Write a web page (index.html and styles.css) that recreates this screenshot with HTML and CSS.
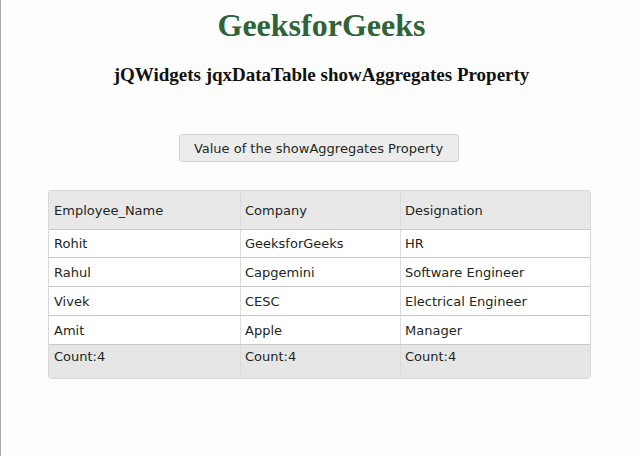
FILE: index.html
```html
<!DOCTYPE html>
<html>
<head>
<meta charset="utf-8">
<link rel="stylesheet" href="styles.css">
</head>
<body>
<div class="page">
  <h1 class="title">GeeksforGeeks</h1>
  <h3 class="subtitle">jQWidgets jqxDataTable showAggregates Property</h3>
  <div class="btn-wrap">
    <button class="btn">Value of the showAggregates Property</button>
  </div>
  <div class="table">
    <div class="row head">
      <div class="cell c1">Employee_Name</div>
      <div class="cell c2">Company</div>
      <div class="cell c3">Designation</div>
    </div>
    <div class="row first">
      <div class="cell c1">Rohit</div>
      <div class="cell c2">GeeksforGeeks</div>
      <div class="cell c3">HR</div>
    </div>
    <div class="row">
      <div class="cell c1">Rahul</div>
      <div class="cell c2">Capgemini</div>
      <div class="cell c3">Software Engineer</div>
    </div>
    <div class="row">
      <div class="cell c1">Vivek</div>
      <div class="cell c2">CESC</div>
      <div class="cell c3">Electrical Engineer</div>
    </div>
    <div class="row">
      <div class="cell c1">Amit</div>
      <div class="cell c2">Apple</div>
      <div class="cell c3">Manager</div>
    </div>
    <div class="row agg">
      <div class="cell c1">Count:4</div>
      <div class="cell c2">Count:4</div>
      <div class="cell c3">Count:4</div>
    </div>
  </div>
</div>
</body>
</html>
```
FILE: styles.css
```css
html, body {
  margin: 0;
  padding: 0;
  background: #fdfdfd;
}
.page {
  border-left: 1px solid #a8a8a8;
  height: 456px;
  box-sizing: border-box;
  padding-top: 7px;
}
.title {
  font-family: "Liberation Serif", serif;
  font-weight: bold;
  font-size: 32px;
  line-height: 37px;
  color: #2f6338;
  text-align: center;
  margin: 0;
}
.subtitle {
  font-family: "Liberation Serif", serif;
  font-weight: bold;
  font-size: 19px;
  line-height: 22px;
  color: #111;
  text-align: center;
  margin: 20px 0 0 0;
}
.btn-wrap {
  display: flex;
  justify-content: center;
  margin-top: 48px;
  padding-right: 6px;
}
.btn {
  font-family: "DejaVu Sans", Verdana, sans-serif;
  font-size: 13px;
  color: #1c2a1c;
  background: #ececec;
  border: 1px solid #d4d4d4;
  border-radius: 3px;
  width: 280px;
  height: 28px;
  padding: 0;
}
.table {
  margin: 28px 0 0 47px;
  width: 541px;
  border: 1px solid #d8d8d8;
  border-radius: 3px;
  overflow: hidden;
  font-family: "DejaVu Sans", Verdana, sans-serif;
  font-size: 13px;
  color: #1c261c;
  background: #fff;
}
.row {
  display: flex;
  height: 29px;
  border-top: 1px solid #c8c8c8;
  box-sizing: border-box;
}
.row.first {
  height: 28px;
}
.row.head {
  height: 38px;
  border-top: none;
  background: #e8e8e8;
}
.row.agg {
  height: 34px;
  background: #e6e6e6;
}
.cell {
  box-sizing: border-box;
  padding: 0 5px;
  display: flex;
  align-items: center;
}
.agg .cell {
  align-items: flex-start;
  padding-top: 4px;
}
.c1 { width: 191px; }
.c2 { width: 160px; border-left: 1px solid #dcdcdc; padding-left: 4px; }
.c3 { flex: 1; border-left: 1px solid #dcdcdc; padding-left: 4px; }
```
